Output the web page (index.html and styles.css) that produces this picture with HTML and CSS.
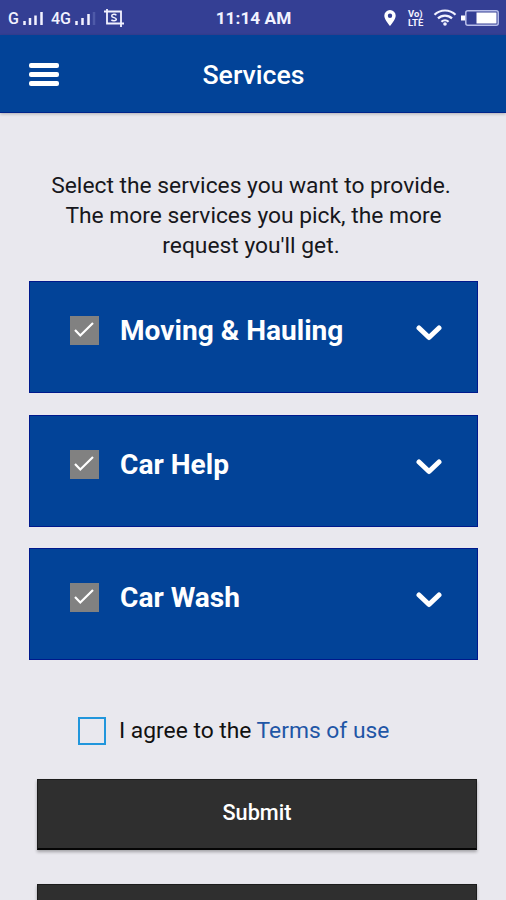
FILE: index.html
```html
<!DOCTYPE html>
<html lang="en">
<head>
  <meta charset="UTF-8">
  <meta name="viewport" content="width=device-width, initial-scale=1.0">
  <title>Services</title>
  <link rel="stylesheet" href="styles.css">
</head>
<body>
  <div class="status-bar">
    <div class="status-left">
      <span class="network">G</span>
      <svg class="signal" width="22" height="13" viewBox="0 0 22 13">
        <path d="M2.500 9v4M8 6v7M13.500 3.500v9.500M19.500 0v13" />
      </svg>
      <span class="network second">4G</span>
      <svg class="signal" width="22" height="13" viewBox="0 0 22 13">
        <path d="M2.500 9v4M8.500 6v7M14.500 2v11" />
        <path class="dim" d="M20 0v13" />
      </svg>
      <svg class="screenshot" width="20" height="18" viewBox="0 0 20 18">
        <path d="M3 0v14.500H20M0 2.500h17V18" />
        <path class="thin" d="M12.300 6.300C11.500 4.800 7.700 4.900 7.700 6.900S12.300 8.300 12.300 10.200 8.300 12 7.400 10.700" />
      </svg>
    </div>
    <span class="time">11:14 AM</span>
    <div class="status-right">
      <svg class="pin" width="12" height="16" viewBox="0 0 12 16">
        <path fill-rule="evenodd" d="M6 0a5.700 5.700 0 0 0-5.700 5.700C.3 9.500 6 16 6 16s5.700-6.500 5.700-10.300A5.700 5.700 0 0 0 6 0zm0 3.500a2.200 2.200 0 1 1 0 4.400 2.200 2.200 0 0 1 0-4.400z" />
      </svg>
      <span class="volte">Vo)<br>LTE</span>
      <svg class="wifi" width="24" height="17" viewBox="0 0 24 17">
        <path d="M1.500 5.800a15 15 0 0 1 21 0M5 9.400a10 10 0 0 1 14 0M8.400 12.700a5.200 5.200 0 0 1 7.200 0" />
        <circle cx="12" cy="15" r="1.800" />
      </svg>
      <svg class="battery" width="38" height="16" viewBox="0 0 38 16">
        <rect class="case" x="4.800" y=".8" width="32.400" height="14.400" rx="2" />
        <path d="M0 5.500h4v5H0zM15.500 2.500h20v11h-20z" />
      </svg>
    </div>
  </div>

  <header>
    <button class="menu-btn" aria-label="Menu">
      <span></span>
      <span></span>
      <span></span>
    </button>
    <h1>Services</h1>
  </header>

  <main>
    <p class="intro">
      <span>Select the services you want to provide.</span>
      <span class="middle">The more services you pick, the more</span>
      <span>request you'll get.</span>
    </p>

    <div class="service">
      <svg class="checked" width="29" height="29" viewBox="0 0 29 29"><path d="M5 14l5.300 5.500L23 7" /></svg>
      <h2>Moving &amp; Hauling</h2>
      <svg class="arrow" width="26" height="16" viewBox="0 0 26 16"><path d="M3 3l10 9.500L23 3" /></svg>
    </div>
    <div class="service">
      <svg class="checked" width="29" height="29" viewBox="0 0 29 29"><path d="M5 14l5.300 5.500L23 7" /></svg>
      <h2>Car Help</h2>
      <svg class="arrow" width="26" height="16" viewBox="0 0 26 16"><path d="M3 3l10 9.500L23 3" /></svg>
    </div>
    <div class="service">
      <svg class="checked" width="29" height="29" viewBox="0 0 29 29"><path d="M5 14l5.300 5.500L23 7" /></svg>
      <h2>Car Wash</h2>
      <svg class="arrow" width="26" height="16" viewBox="0 0 26 16"><path d="M3 3l10 9.500L23 3" /></svg>
    </div>

    <div class="agree">
      <span class="box"></span>
      <p>I agree to the <a href="#">Terms of use</a></p>
    </div>

    <button class="submit-btn">Submit</button>
    <button class="submit-btn next" aria-label="Cancel"></button>
  </main>
</body>
</html>
```
FILE: styles.css
```css
body, html {
  margin: 0;
  padding: 0;
  height: 100%;
  overflow: hidden;
  background-color: #e9e8ee;
  font-family: Roboto, sans-serif;
}

svg {
  flex-shrink: 0;
}

.status-bar {
  display: grid;
  grid-template-columns: 1fr auto 1fr;
  align-items: center;
  height: 35px;
  padding: 0 7px 0 8px;
  box-sizing: border-box;
  background-color: #343f94;
  color: #f2f2ff;
}

.status-left,
.status-right {
  display: flex;
  align-items: center;
}

.status-right {
  justify-content: flex-end;
}

.network {
  font-size: 16px;
  font-weight: 500;
  line-height: 18px;
  width: 13px;
  margin-top: 3px;
}

.network.second {
  width: 22px;
  margin-left: 7px;
}

.signal {
  margin-left: 1px;
  margin-top: 2px;
  fill: none;
  stroke: #f2f2ff;
  stroke-width: 2.5;
}

.signal .dim {
  stroke: #4e5aa8;
}

.screenshot {
  margin-left: 8px;
  fill: none;
  stroke: #f2f2ff;
  stroke-width: 1.8;
}

.screenshot .thin {
  stroke-width: 1.5;
}

.time {
  font-size: 17.3px;
  font-weight: 700;
  line-height: 20px;
  margin-top: 1px;
}

.pin {
  fill: #fff;
}

.volte {
  width: 17px;
  margin-left: 12px;
  font-size: 9.5px;
  font-weight: 700;
  line-height: 9px;
}

.wifi {
  margin-left: 8px;
  fill: none;
  stroke: #f2f2ff;
  stroke-width: 2.2;
}

.wifi circle {
  fill: #f2f2ff;
  stroke: none;
}

.battery {
  margin-left: 4px;
  fill: #fff;
}

.battery .case {
  fill: none;
  stroke: #b9bfea;
  stroke-width: 1.5;
}

header {
  display: grid;
  grid-template-columns: 1fr auto 1fr;
  align-items: center;
  height: 78px;
  padding: 0 28px 0 29px;
  box-sizing: border-box;
  background-color: #024398;
  border-bottom: 1px solid #00248a;
  box-shadow: 0 1px 3px rgba(0, 0, 0, 0.25);
}

.menu-btn {
  display: flex;
  flex-direction: column;
  gap: 4px;
  width: 30px;
  margin-top: 1px;
  padding: 0;
  border: none;
  background: none;
  cursor: pointer;
}

.menu-btn span {
  height: 5px;
  border-radius: 2px;
  background-color: #fff;
}

h1 {
  margin: 2px 0 0;
  font-size: 26.7px;
  font-weight: 500;
  line-height: 30px;
  color: #fff;
}

main {
  padding: 58px 28px 0 29px;
}

.intro {
  margin: 0 0 20px;
  font-size: 22.8px;
  line-height: 30px;
  color: #17171c;
  text-align: center;
  white-space: nowrap;
}

.intro span {
  display: block;
  margin-right: 5px;
}

.intro .middle {
  margin-right: 0;
}

.service {
  display: flex;
  align-items: flex-start;
  height: 112px;
  margin-bottom: 21.6px;
  padding: 33px 35px 0 40px;
  box-sizing: border-box;
  background-color: #024398;
  border: 1px solid #00198c;
}

.checked {
  margin-top: 1px;
  background-color: #818181;
  fill: none;
  stroke: #fff;
  stroke-width: 2.2;
}

.service h2 {
  flex: 1;
  margin: 0 0 0 21px;
  font-size: 28.1px;
  font-weight: 700;
  line-height: 32px;
  color: #fff;
}

.arrow {
  margin-top: 10px;
  fill: none;
  stroke: #fff;
  stroke-width: 5;
  stroke-linecap: round;
  stroke-linejoin: round;
}

.agree {
  display: flex;
  align-items: center;
  height: 30px;
  margin: 56px 0 33px 49px;
}

.agree .box {
  width: 28px;
  height: 28px;
  box-sizing: border-box;
  border: 2px solid #2196dc;
}

.agree p {
  margin: 0 0 0 13px;
  font-size: 22.8px;
  line-height: 30px;
  color: #111;
  white-space: nowrap;
}

.agree a {
  color: #1f56a6;
  text-decoration: none;
}

.submit-btn {
  display: block;
  width: 440px;
  height: 71px;
  margin: 0 0 34px 8px;
  padding: 0 0 4px;
  border: 1px solid #1c1c1c;
  border-bottom: 2px solid #050505;
  background-color: #2f2f2f;
  box-shadow: 0 2px 3px rgba(0, 0, 0, 0.3);
  color: #fff;
  font-family: inherit;
  font-size: 21.7px;
  font-weight: 500;
  cursor: pointer;
}

.submit-btn.next {
  height: 16px;
  margin-bottom: 0;
  border-bottom: none;
}
```
